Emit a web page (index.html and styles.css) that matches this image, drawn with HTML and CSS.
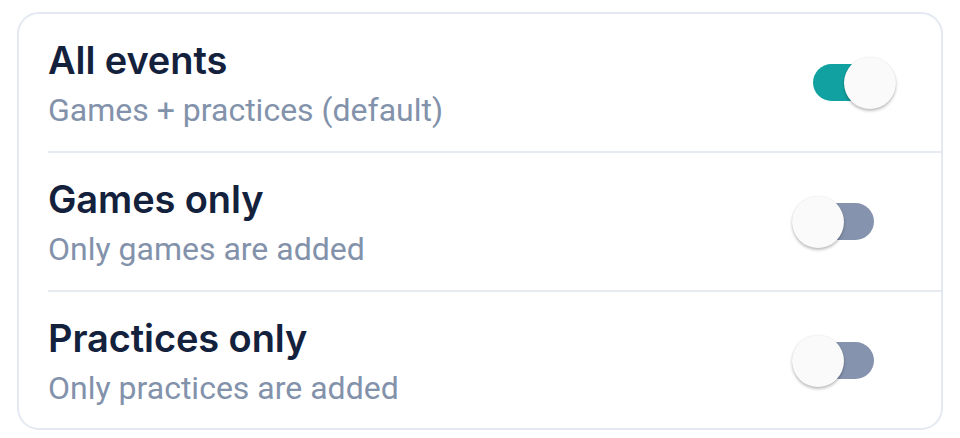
FILE: index.html
```html
<!DOCTYPE html>
<html lang="en">
<head>
<meta charset="utf-8">
<link rel="stylesheet" href="styles.css">
</head>
<body>
<div class="card">
  <div class="row">
    <div class="text">
      <div class="title">All events</div>
      <div class="sub">Games + practices (default)</div>
    </div>
    <div class="switch on"><div class="track"></div><div class="thumb"></div></div>
  </div>
  <div class="row">
    <div class="text">
      <div class="title">Games only</div>
      <div class="sub">Only games are added</div>
    </div>
    <div class="switch"><div class="track"></div><div class="thumb"></div></div>
  </div>
  <div class="row last">
    <div class="text">
      <div class="title">Practices only</div>
      <div class="sub">Only practices are added</div>
    </div>
    <div class="switch"><div class="track"></div><div class="thumb"></div></div>
  </div>
</div>
</body>
</html>
```
FILE: styles.css
```css
html, body { margin: 0; padding: 0; background: #ffffff; }
body { padding: 12px 17px 0 17px; }
.card {
  width: 926px;
  height: 418px;
  box-sizing: border-box;
  border: 2px solid #e4e9f1;
  border-radius: 22px;
  padding-left: 29px;
  display: flex;
  flex-direction: column;
  overflow: hidden;
}
.row {
  height: 139px;
  flex: 0 0 139px;
  box-sizing: border-box;
  border-bottom: 2px solid #e6eaf1;
  display: flex;
  align-items: center;
  justify-content: space-between;
  padding-right: 67px;
}
.row.last { border-bottom: none; flex: 1 1 auto; }
.text { display: flex; flex-direction: column; padding-top: 9px; }
.title {
  font-family: Inter, "Noto Sans", sans-serif;
  font-weight: 600;
  font-size: 38px;
  line-height: 46px;
  color: #14213d;
  letter-spacing: -0.1px;
}
.sub {
  font-family: Roboto, sans-serif;
  font-size: 32px;
  line-height: 54px;
  color: #8392ab;
}
.switch {
  position: relative;
  width: 61px;
  height: 37px;
}
.track {
  width: 61px;
  height: 37px;
  border-radius: 19px;
  background: #8593ae;
}
.switch.on .track { background: #12a1a1; }
.thumb {
  position: absolute;
  top: -7px;
  left: -21px;
  width: 52px;
  height: 52px;
  border-radius: 50%;
  background: #fafafa;
  box-shadow: 0 2px 3px rgba(0,0,0,0.25), 0 0 1px rgba(0,0,0,0.12);
}
.switch.on .thumb { left: 31px; }
```
